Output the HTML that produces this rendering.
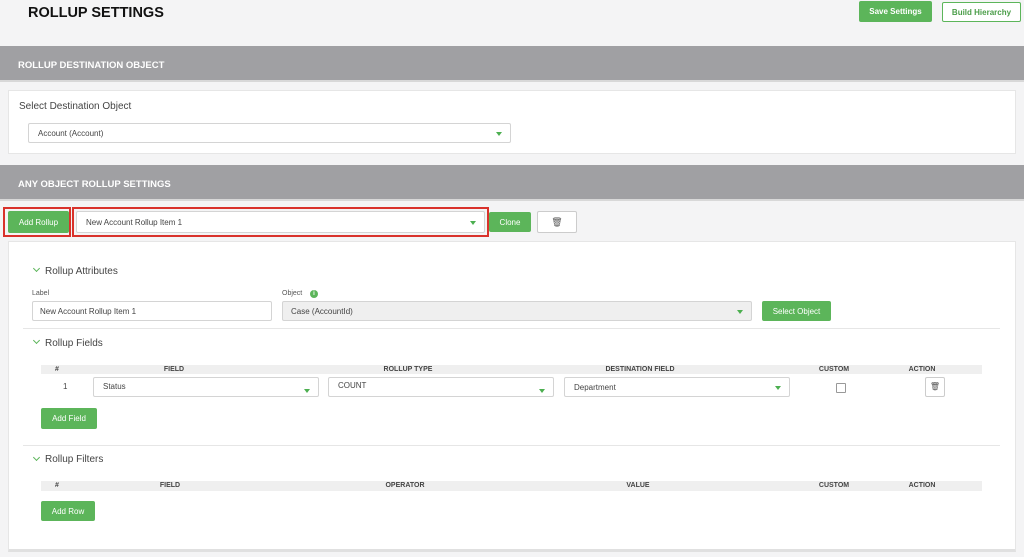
<!DOCTYPE html>
<html><head><style>
*{box-sizing:border-box;margin:0;padding:0}
body{width:1024px;height:557px;background:#f4f4f5;font-family:"Liberation Sans",sans-serif;position:relative;overflow:hidden;color:#333}
.a{position:absolute}
.btn{position:absolute;background:#5cb55a;color:#fff;font-size:8px;display:flex;align-items:center;justify-content:center;border-radius:2px}
.hdr{position:absolute;left:0;width:1024px;height:36px;background:#a0a0a3;color:#fff;font-weight:bold;font-size:9.5px;padding:14px 0 0 18px;border-bottom:2px solid #d8d8d8}
.sel{position:absolute;background:#fff;border:1px solid #d4d4d4;border-radius:2px;font-size:8px;color:#444;padding-left:9px;display:flex;align-items:center}
.sel .t{position:absolute;right:8px;top:50%;margin-top:-1px;width:0;height:0;border-left:3px solid transparent;border-right:3px solid transparent;border-top:4px solid #4caf50}
.th{position:absolute;font-size:7px;font-weight:bold;color:#444;transform:translateX(-50%)}
.sec{position:absolute;font-size:10px;color:#444}
.chev{position:absolute;width:5px;height:5px;border-right:1.2px solid #5cb55a;border-bottom:1.2px solid #5cb55a;transform:rotate(45deg)}
</style></head><body>
<div class="a" style="left:28px;top:5px;font-size:14.5px;font-weight:bold;color:#111">ROLLUP SETTINGS</div>
<div class="btn" style="left:859px;top:1px;width:73px;height:21px;font-weight:bold">Save Settings</div>
<div class="btn" style="left:942px;top:2px;width:79px;height:20px;background:#fff;border:1px solid #5cb55a;color:#4a9d48;font-weight:bold">Build Hierarchy</div>

<div class="hdr" style="top:46px">ROLLUP DESTINATION OBJECT</div>
<div class="a" style="left:8px;top:90px;width:1008px;height:64px;background:#fff;border:1px solid #e6e6e6"></div>
<div class="a" style="left:19px;top:101px;font-size:10px;color:#444">Select Destination Object</div>
<div class="sel" style="left:28px;top:123px;width:483px;height:20px">Account (Account)<span class="t"></span></div>

<div class="hdr" style="top:165px">ANY OBJECT ROLLUP SETTINGS</div>

<div class="a" style="left:3px;top:207px;width:68px;height:30px;border:2px solid #d9322b"></div>
<div class="a" style="left:72px;top:207px;width:417px;height:30px;border:2px solid #d9322b"></div>
<div class="btn" style="left:8px;top:211px;width:61px;height:22px">Add Rollup</div>
<div class="sel" style="left:76px;top:211px;width:409px;height:22px">New Account Rollup Item 1<span class="t"></span></div>
<div class="btn" style="left:489px;top:212px;width:42px;height:20px">Clone</div>
<div class="a" style="left:537px;top:211px;width:40px;height:22px;background:#fff;border:1px solid #ccc;border-radius:2px;font-size:9px;color:#555;text-align:center;line-height:20px">&#128465;</div>

<div class="a" style="left:8px;top:241px;width:1008px;height:311px;background:#fff;border:1px solid #e6e6e6;border-bottom:3px solid #e0e0e0"></div>

<div class="chev" style="left:34px;top:266px"></div>
<div class="sec" style="left:45px;top:266px">Rollup Attributes</div>
<div class="a" style="left:32px;top:290px;font-size:7px;color:#555">Label</div>
<div class="sel" style="left:32px;top:301px;width:240px;height:20px;padding-left:7px">New Account Rollup Item 1</div>
<div class="a" style="left:282px;top:290px;font-size:7px;color:#555">Object</div>
<div class="a" style="left:310px;top:290px;width:8px;height:8px;border-radius:50%;background:#5cb55a;color:#fff;font-size:6px;text-align:center;line-height:8px;font-weight:bold">i</div>
<div class="sel" style="left:282px;top:301px;width:470px;height:20px;background:#efefef;padding-left:8px">Case (AccountId)<span class="t"></span></div>
<div class="btn" style="left:762px;top:301px;width:69px;height:20px">Select Object</div>
<div class="a" style="left:23px;top:328px;width:977px;height:1px;background:#e6e6e6"></div>

<div class="chev" style="left:34px;top:338px"></div>
<div class="sec" style="left:45px;top:338px">Rollup Fields</div>
<div class="a" style="left:41px;top:365px;width:941px;height:9px;background:#efefef"></div>
<div class="th" style="left:57px;top:366px">#</div>
<div class="th" style="left:174px;top:366px">FIELD</div>
<div class="th" style="left:408px;top:366px">ROLLUP TYPE</div>
<div class="th" style="left:640px;top:366px">DESTINATION FIELD</div>
<div class="th" style="left:834px;top:366px">CUSTOM</div>
<div class="th" style="left:922px;top:366px">ACTION</div>
<div class="a" style="left:63px;top:382px;font-size:8px;color:#444">1</div>
<div class="sel" style="left:93px;top:377px;width:226px;height:20px;align-items:flex-start;padding-top:4px">Status<span class="t" style="margin-top:2px"></span></div>
<div class="sel" style="left:328px;top:377px;width:226px;height:20px;align-items:flex-start;padding-top:3px">COUNT<span class="t" style="margin-top:2px"></span></div>
<div class="sel" style="left:564px;top:377px;width:226px;height:20px">Department<span class="t"></span></div>
<div class="a" style="left:836px;top:383px;width:10px;height:10px;border:1px solid #999;border-radius:1px"></div>
<div class="a" style="left:925px;top:377px;width:20px;height:20px;border:1px solid #ccc;border-radius:2px;font-size:8px;color:#555;text-align:center;line-height:18px">&#128465;</div>
<div class="btn" style="left:41px;top:408px;width:56px;height:21px">Add Field</div>
<div class="a" style="left:23px;top:445px;width:977px;height:1px;background:#e6e6e6"></div>

<div class="chev" style="left:34px;top:455px"></div>
<div class="sec" style="left:45px;top:454px">Rollup Filters</div>
<div class="a" style="left:41px;top:481px;width:941px;height:10px;background:#efefef"></div>
<div class="th" style="left:57px;top:482px">#</div>
<div class="th" style="left:170px;top:482px">FIELD</div>
<div class="th" style="left:405px;top:482px">OPERATOR</div>
<div class="th" style="left:638px;top:482px">VALUE</div>
<div class="th" style="left:834px;top:482px">CUSTOM</div>
<div class="th" style="left:922px;top:482px">ACTION</div>
<div class="btn" style="left:41px;top:501px;width:54px;height:20px">Add Row</div>
</body></html>
